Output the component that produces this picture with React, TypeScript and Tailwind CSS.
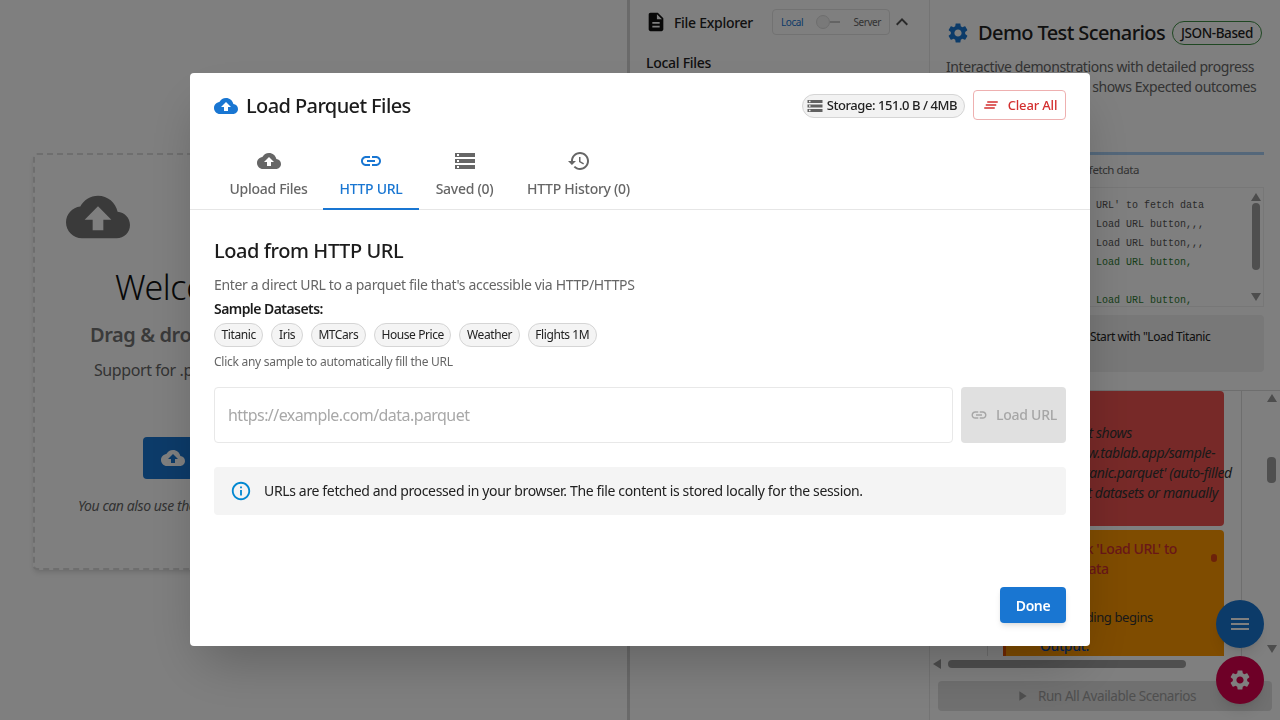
import React from "react";

const FONT = "[font-family:'Noto_Sans','Open_Sans',sans-serif]";

const paths = {
  cloud: "M19.35 10.04C18.67 6.59 15.64 4 12 4 9.11 4 6.6 5.64 5.35 8.04 2.34 8.36 0 10.91 0 14c0 3.31 2.69 6 6 6h13c2.76 0 5-2.24 5-5 0-2.64-2.05-4.78-4.65-4.96zM14 13v4h-4v-4H7l5-5 5 5h-3z",
  link: "M3.9 12c0-1.71 1.39-3.1 3.1-3.1h4V7H7c-2.76 0-5 2.24-5 5s2.24 5 5 5h4v-1.9H7c-1.71 0-3.1-1.39-3.1-3.1zM8 13h8v-2H8v2zm9-6h-4v1.9h4c1.71 0 3.1 1.39 3.1 3.1s-1.39 3.1-3.1 3.1h-4V17h4c2.76 0 5-2.24 5-5s-2.24-5-5-5z",
  storage: "M2 20h20v-4H2v4zm2-3h2v2H4v-2zM2 4v4h20V4H2zm4 3H4V5h2v2zm-4 7h20v-4H2v4zm2-3h2v2H4v-2z",
  history: "M13 3c-4.97 0-9 4.03-9 9H1l3.89 3.89.07.14L9 12H6c0-3.87 3.13-7 7-7s7 3.13 7 7-3.13 7-7 7c-1.93 0-3.68-.79-4.94-2.06l-1.42 1.42C8.27 19.99 10.51 21 13 21c4.97 0 9-4.03 9-9s-4.03-9-9-9zm-1 5v5l4.28 2.54.72-1.21-3.5-2.08V8H12z",
  clear: "M5 13h14v-2H5v2zm-2 4h14v-2H3v2zM7 7v2h14V7H7z",
  info: "M11 7h2v2h-2zm0 4h2v6h-2zm1-9C6.48 2 2 6.48 2 12s4.48 10 10 10 10-4.48 10-10S17.52 2 12 2zm0 18c-4.41 0-8-3.59-8-8s3.59-8 8-8 8 3.59 8 8-3.59 8-8 8z",
  file: "M14 2H6c-1.1 0-1.99.9-1.99 2L4 20c0 1.1.89 2 1.99 2H18c1.1 0 2-.9 2-2V8l-6-6zm2 16H8v-2h8v2zm0-4H8v-2h8v2zm-3-5V3.5L18.5 9H13z",
  gear: "M19.14 12.94c.04-.3.06-.61.06-.94 0-.32-.02-.64-.07-.94l2.03-1.58c.18-.14.23-.41.12-.61l-1.92-3.32c-.12-.22-.37-.29-.59-.22l-2.39.96c-.5-.38-1.03-.7-1.62-.94l-.36-2.54c-.04-.24-.24-.41-.48-.41h-3.84c-.24 0-.43.17-.47.41l-.36 2.54c-.59.24-1.13.57-1.62.94l-2.39-.96c-.22-.08-.47 0-.59.22L2.74 8.87c-.12.21-.08.47.12.61l2.03 1.58c-.05.3-.09.63-.09.94s.02.64.07.94l-2.03 1.58c-.18.14-.23.41-.12.61l1.92 3.32c.12.22.37.29.59.22l2.39-.96c.5.38 1.03.7 1.62.94l.36 2.54c.05.24.24.41.48.41h3.84c.24 0 .44-.17.47-.41l.36-2.54c.59-.24 1.13-.56 1.62-.94l2.39.96c.22.08.47 0 .59-.22l1.92-3.32c.12-.22.07-.47-.12-.61l-2.01-1.58zM12 15.6c-1.98 0-3.6-1.62-3.6-3.6s1.62-3.6 3.6-3.6 3.6 1.62 3.6 3.6-1.62 3.6-3.6 3.6z",
  menu: "M3 18h18v-2H3v2zm0-5h18v-2H3v2zm0-7v2h18V6H3z",
  play: "M8 5v14l11-7z",
  up: "M12 8l-6 6 1.41 1.41L12 10.83l4.59 4.58L18 14z",
};

const Icon = ({ d, className }: { d: string; className: string }) => (
  <svg viewBox="0 0 24 24" fill="currentColor" className={className}>
    <path d={d} />
  </svg>
);

// scrollbar arrow
const Arrow = ({ dir, className }: { dir: "up" | "down" | "left"; className?: string }) => {
  const points = { up: "5,0 10,8 0,8", down: "0,0 10,0 5,8", left: "8,0 8,10 0,5" }[dir];
  const box = dir === "left" ? "0 0 8 10" : "0 0 10 8";
  return (
    <svg viewBox={box} fill="#9a9a9a" className={dir === "left" ? `w-[8px] h-[10px] ${className ?? ""}` : `w-[10px] h-[8px] ${className ?? ""}`}>
      <polygon points={points} />
    </svg>
  );
};

const tabs = [
  { label: "Upload Files", icon: paths.cloud, width: "w-[109px]" },
  { label: "HTTP URL", icon: paths.link, width: "w-[96px]", active: true },
  { label: "Saved (0)", icon: paths.storage, width: "w-[91px]" },
  { label: "HTTP History (0)", icon: paths.history, width: "w-[137px]" },
];

const samples = ["Titanic", "Iris", "MTCars", "House Price", "Weather", "Flights 1M"];

const logLines = [
  { text: "Click 'Load URL' to fetch data", green: false },
  { text: "    Clicked Load URL button,,,", green: false },
  { text: "    Clicked Load URL button,,,", green: false },
  { text: "  Completed Load URL button,", green: true },
  { text: "", green: false },
  { text: "  Completed Load URL button,", green: true },
];

const WelcomePanel = () => (
  <div className="flex-1 pl-[33px] pt-[153px] bg-white overflow-hidden">
    <div className="w-[560px] h-[417px] border-2 border-dashed border-[#dcdcdc] rounded pl-[31px] pt-[30px] shadow-md">
      <Icon d={paths.cloud} className="w-16 h-16 text-[#757575]" />
      <div className="ml-[49px] mt-[16px] text-[34px] font-light leading-[44px] text-[#111] whitespace-nowrap">Welcome to TabLab</div>
      <div className="ml-[24px] mt-[12px] text-xl font-semibold text-[#757575] whitespace-nowrap">Drag &amp; drop your files here</div>
      <div className="ml-[28px] mt-[9px] text-base text-[#666] whitespace-nowrap">Support for .parquet files</div>
      <div className="ml-[77px] mt-[55px] w-[220px] h-[42px] bg-[#1976d2] rounded flex items-center pl-[18px]">
        <Icon d={paths.cloud} className="w-6 h-6 text-white" />
      </div>
      <div className="ml-[12px] mt-[17px] text-sm italic text-[#666] whitespace-nowrap">You can also use the buttons above</div>
    </div>
  </div>
);

const ExplorerPanel = () => (
  <div className="w-[303px] bg-white border-l-[3px] border-r border-l-[#d4d4d4] border-r-[#e8e8e8] pl-[16px] pt-[8px]">
    <div className="flex items-center h-[28px]">
      <Icon d={paths.file} className="w-[22px] h-[22px] text-[#111] -ml-[1px]" />
      <span className="ml-[7px] mt-[1px] text-sm tracking-[-0.02em] font-medium text-[#222]">File Explorer</span>
      <div className="ml-[19px] w-[118px] h-[26px] border border-[#e4e4e4] rounded flex items-center justify-between px-2 text-[10px]">
        <span className="text-[#1976d2]">Local</span>
        <div className="flex items-center">
          <span className="w-[14px] h-[14px] rounded-full bg-[#f2f2f2] border border-[#dcdcdc]" />
          <span className="w-[10px] h-[2px] bg-[#c8c8c8]" />
        </div>
        <span className="text-[#666]">Server</span>
      </div>
      <Icon d={paths.up} className="w-6 h-6 text-[#555]" />
    </div>
    <div className="mt-[17px] text-sm tracking-[-0.02em] font-medium text-[#222]">Local Files</div>
  </div>
);

const ScenarioPanel = () => (
  <div className="w-[350px] bg-white flex flex-col pt-[19px] pl-[16px] pr-[8px] overflow-hidden">
    <div className="flex items-center gap-[8px] h-[28px]">
      <Icon d={paths.gear} className="w-6 h-6 text-[#1976d2]" />
      <span className="text-[20px] tracking-[-0.03em] font-medium text-[#222] whitespace-nowrap">Demo Test Scenarios</span>
      <span className="-ml-[1px] px-[8px] h-[24px] leading-[22px] text-[13.5px] font-medium border border-[#3f8f45] rounded-full text-[#222] whitespace-nowrap">JSON-Based</span>
    </div>
    <p className="mt-[10px] text-sm leading-5 text-[#666] w-[316px]">Interactive demonstrations with detailed progress tracking, and each step shows Expected outcomes</p>
    <div className="mt-[55px] h-[3px] w-[318px] bg-[#a8cff5]" />
    <div className="mt-[6px] ml-[130px] text-[11.5px] text-[#666] whitespace-nowrap">to fetch data</div>
    <div className="mt-[9px] h-[120px] w-[318px] border border-[#eee] flex">
      <div className="flex-1 pl-[77px] pt-[8px] font-['Liberation_Mono'] tracking-normal text-[10px] text-[#555] whitespace-pre overflow-hidden">
        {logLines.map((line, i) => (
          <div key={i} className={line.green ? "h-[19px] leading-[19px] text-[#2e7d32]" : "h-[19px] leading-[19px]"}>{line.text}</div>
        ))}
      </div>
      <div className="w-[14px] flex flex-col items-center py-[5px]">
        <Arrow dir="up" />
        <div className="w-[8px] h-[67px] mt-[2px] rounded bg-[#9e9e9e]" />
        <Arrow dir="down" className="mt-auto" />
      </div>
    </div>
    <div className="mt-[8px] h-[57px] w-[318px] bg-[#f0f0f0] rounded text-xs text-[#222] pl-[144px] pt-[14px] whitespace-nowrap">Start with "Load Titanic</div>
    <div className="mt-[18px] -ml-[16px] -mr-[8px] flex-1 border-t border-[#ddd]">
      <div className="flex h-[265px]">
        <div className="relative w-[73px] shrink-0">
          <div className="absolute left-[57px] top-0 bottom-0 w-px bg-[#ddd]" />
        </div>
        <div className="w-[221px] flex flex-col gap-[4px]">
          <div className="h-[135px] bg-[#ef5350] rounded text-sm italic text-[#333] leading-5 pl-[21px] pt-[32px]">
            <div className="-ml-[12px] whitespace-nowrap">The URL input shows</div>
            <div className="whitespace-nowrap">'https://www.tablab.app/sample-</div>
            <div className="whitespace-nowrap">datasets/titanic.parquet' (auto-filled</div>
            <div className="whitespace-nowrap">try different datasets or manually</div>
          </div>
          <div className="relative h-[126px] bg-[#ff9800] rounded-t border-l-[3px] border-[#e65100] overflow-hidden pl-[58px] pt-[9px] text-sm leading-5 font-medium text-[#d32f2f]">
            <div className="whitespace-nowrap">Click 'Load URL' to</div>
            <div className="-ml-[8px] whitespace-nowrap">the data</div>
            <div className="ml-[1px] mt-[28px] whitespace-nowrap text-[13px] text-[#333] font-normal">Loading begins</div>
            <div className="-ml-[24px] mt-[9px] whitespace-nowrap text-[#0d47a1]">Output:</div>
            <span className="absolute left-[205px] top-[24px] w-[6px] h-[8px] rounded-full bg-[#d84315]" />
          </div>
        </div>
        <div className="ml-[17px] border-l border-[#ddd] flex-1 flex flex-col items-end pr-[3px] pt-[3px] pb-[3px]">
          <Arrow dir="up" />
          <div className="w-[9px] h-[26px] mt-[55px] mr-[1px] rounded bg-[#9e9e9e]" />
          <Arrow dir="down" className="mt-auto" />
        </div>
      </div>
      <div className="mt-[3px] pl-[3px] flex items-center">
        <Arrow dir="left" />
        <div className="ml-[7px] w-[238px] h-[8px] rounded bg-[#9e9e9e]" />
      </div>
      <div className="mt-[12px] ml-[8px] w-[334px] h-[30px] rounded bg-[#e0e0e0] flex items-center justify-center gap-[8px] text-[13.5px] text-[#9e9e9e]">
        <Icon d={paths.play} className="w-4 h-4" />
        Run All Available Scenarios
      </div>
    </div>
  </div>
);

const Modal = () => (
  <div className="fixed inset-0 bg-black/50 flex justify-center items-start pt-[73px]">
    <div className="w-[900px] h-[573px] bg-white rounded shadow-2xl flex flex-col">
      <div className="flex items-center justify-between pl-[24px] pr-[24px] h-[66px]">
        <div className="flex items-center gap-[8px]">
          <Icon d={paths.cloud} className="w-6 h-6 text-[#1976d2]" />
          <span className="text-[20px] tracking-[-0.03em] font-medium text-[#1c1c1c]">Load Parquet Files</span>
        </div>
        <div className="flex items-center gap-[8px]">
          <div className="h-[24px] rounded-full border border-[#d5d5d5] bg-[#f2f2f2] flex items-center pl-[3px] pr-[7px] gap-[3px] text-[13px] tracking-[-0.034em] font-medium text-[#222]">
            <Icon d={paths.storage} className="w-[18px] h-[18px] text-[#616161]" />
            Storage: 151.0 B / 4MB
          </div>
          <div className="h-[30px] w-[93px] -mt-[2px] rounded border border-[#eeb0b0] flex items-center justify-center gap-[8px] text-[13px] tracking-[-0.012em] font-medium text-[#d32f2f]">
            <Icon d={paths.clear} className="w-[18px] h-[18px]" />
            <span className="mt-[2px]">Clear All</span>
          </div>
        </div>
      </div>
      <div className="flex pl-[24px] h-[71px] border-b border-[#e6e6e6]">
        {tabs.map((tab) => (
          <div
            key={tab.label}
            className={`${tab.width} flex flex-col items-center pt-[10px] text-sm tracking-[-0.02em] font-medium border-b-2 -mb-px whitespace-nowrap ${
              tab.active ? "text-[#1976d2] border-[#1976d2]" : "text-[#666] border-transparent"
            }`}
          >
            <Icon d={tab.icon} className="w-6 h-6" />
            <span className="mt-[6px]">{tab.label}</span>
          </div>
        ))}
      </div>
      <div className="flex-1 px-[24px] pt-[26px] flex flex-col">
        <h2 className="text-[20px] leading-[30px] font-medium text-[#1c1c1c]">Load from HTTP URL</h2>
        <p className="mt-[9px] text-sm tracking-[-0.024em] leading-5 text-[#666]">Enter a direct URL to a parquet file that's accessible via HTTP/HTTPS</p>
        <p className="mt-[4px] text-sm tracking-[-0.04em] leading-5 font-semibold text-[#1c1c1c]">Sample Datasets:</p>
        <div className="mt-[4px] flex gap-[8px]">
          {samples.map((s) => (
            <span key={s} className="h-[24px] px-[6.6px] rounded-full border border-[#d5d5d5] bg-[#f4f4f4] text-xs leading-[22px] text-[#222]">
              {s}
            </span>
          ))}
        </div>
        <p className="mt-[7px] text-xs tracking-[-0.022em] leading-[16px] text-[#666]">Click any sample to automatically fill the URL</p>
        <div className="mt-[17px] flex gap-[8px]">
          <div className="w-[739px] h-[56px] border border-[#e8e8e8] rounded flex items-center pl-[13px] text-base tracking-[-0.035em] text-[#a8a8a8]">
            https://example.com/data.parquet
          </div>
          <div className="w-[105px] h-[56px] rounded bg-[#e0e0e0] flex items-center justify-center gap-[8px] text-sm tracking-[-0.018em] font-medium text-[#a6a6a6]">
            <Icon d={paths.link} className="w-[18px] h-[18px]" />
            Load URL
          </div>
        </div>
        <div className="mt-[24px] h-[48px] rounded bg-[#f4f4f4] flex items-center pl-[16px] gap-[12px] text-sm tracking-[-0.025em] text-[#222]">
          <Icon d={paths.info} className="w-[22px] h-[22px] text-[#0288d1]" />
          URLs are fetched and processed in your browser. The file content is stored locally for the session.
        </div>
        <div className="mt-auto mb-[23px] self-end w-[66px] h-[36px] rounded bg-[#1976d2] shadow-md flex items-center justify-center pt-[2px] text-sm font-semibold text-white">
          Done
        </div>
      </div>
    </div>
  </div>
);

const App: React.FC = () => {
  return (
    <div className={`${FONT} tracking-[-0.026em] relative w-[1280px] h-[720px] overflow-hidden flex`}>
      <WelcomePanel />
      <ExplorerPanel />
      <ScenarioPanel />
      <div className="fixed right-[16px] top-[600px] w-[48px] h-[48px] rounded-full bg-[#1976d2] flex items-center justify-center shadow-lg">
        <Icon d={paths.menu} className="w-6 h-6 text-white" />
      </div>
      <div className="fixed right-[16px] top-[656px] w-[48px] h-[48px] rounded-full bg-[#dc004e] flex items-center justify-center shadow-lg">
        <Icon d={paths.gear} className="w-6 h-6 text-white" />
      </div>
      <Modal />
    </div>
  );
};

export default App;
